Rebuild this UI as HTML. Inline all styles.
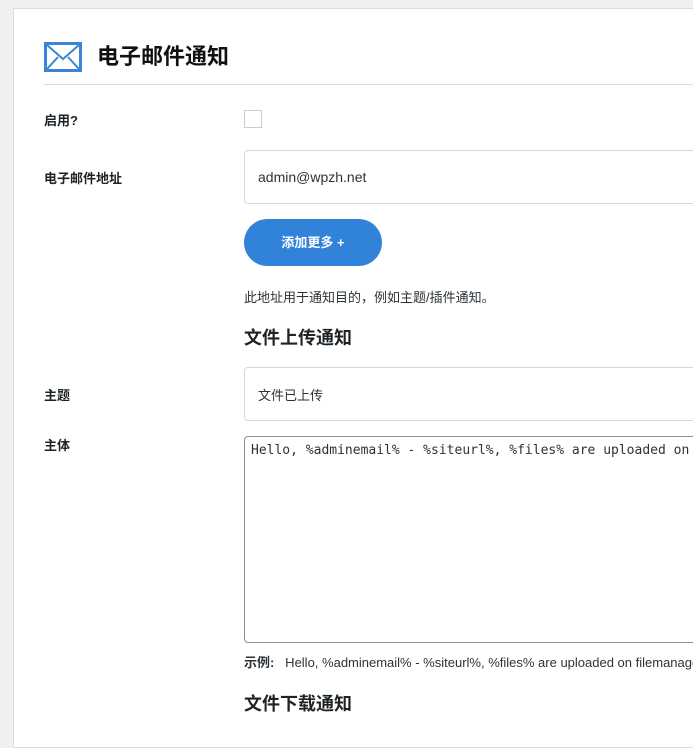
<!DOCTYPE html>
<html><head><meta charset="utf-8"><style>
*{box-sizing:border-box;margin:0;padding:0}
body{width:693px;height:723px;overflow:hidden;background:#f0f0f1;font-family:"Liberation Sans","Noto Sans CJK SC",sans-serif;color:#1d2327;position:relative}
.panel{position:absolute;left:13px;top:8px;width:700px;height:740px;background:#fff;border:1px solid #dcdcde}
.a{position:absolute}
.lbl{font-size:13px;font-weight:bold;color:#1d2327}
.inp{position:absolute;left:244px;width:470px;border:1px solid #d6d6d6;border-radius:4px;background:#fff;font-size:14px;color:#2c3338}
h2{font-size:18px;font-weight:bold;position:absolute;left:244px;color:#1d2327}
</style></head><body>
<div class="panel"></div>
<svg class="a" style="left:44px;top:42px" width="38" height="30" viewBox="0 0 38 30"><rect x="1.5" y="1.5" width="35" height="27" fill="#fff" stroke="#3a86d6" stroke-width="3"/><path d="M3 3 L19 17 L35 3 M3 27 L14 15 M35 27 L24 15" fill="none" stroke="#3a86d6" stroke-width="2"/></svg>
<div class="a" style="left:97px;top:39px;font-size:22px;font-weight:bold;color:#111">电子邮件通知</div>
<div class="a" style="left:44px;top:84px;width:660px;height:1px;background:#dcdcde"></div>
<div class="a lbl" style="left:44px;top:110px">启用?</div>
<div class="a" style="left:244px;top:110px;width:18px;height:18px;border:1px solid #ccc;background:#fff"></div>
<div class="a lbl" style="left:44px;top:168px">电子邮件地址</div>
<div class="inp" style="top:150px;height:54px;padding:18px 13px">admin@wpzh.net</div>
<div class="a" style="left:244px;top:219px;width:138px;height:47px;border-radius:24px;background:#3182d9;color:#fff;font-size:13px;font-weight:bold;text-align:center;line-height:47px">添加更多 +</div>
<div class="a" style="left:244px;top:287px;font-size:13px;color:#2c3338">此地址用于通知目的，例如主题/插件通知。</div>
<h2 style="top:324px">文件上传通知</h2>
<div class="a lbl" style="left:44px;top:385px">主题</div>
<div class="inp" style="top:367px;height:54px;padding:17px 13px;font-size:13px">文件已上传</div>
<div class="a lbl" style="left:44px;top:435px">主体</div>
<div class="inp" style="top:436px;height:207px;padding:6px 6px;border-color:#8c8f94;font-family:'DejaVu Sans Mono','Liberation Mono',monospace;font-size:13px;white-space:nowrap;overflow:hidden">Hello, %adminemail% - %siteurl%, %files% are uploaded on filemanager</div>
<div class="a" style="left:244px;top:652px;font-size:13px;color:#2c3338;white-space:nowrap"><b>示例:</b>&nbsp;&nbsp; Hello, %adminemail% - %siteurl%, %files% are uploaded on filemanager</div>
<h2 style="top:690px">文件下载通知</h2>
</body></html>
